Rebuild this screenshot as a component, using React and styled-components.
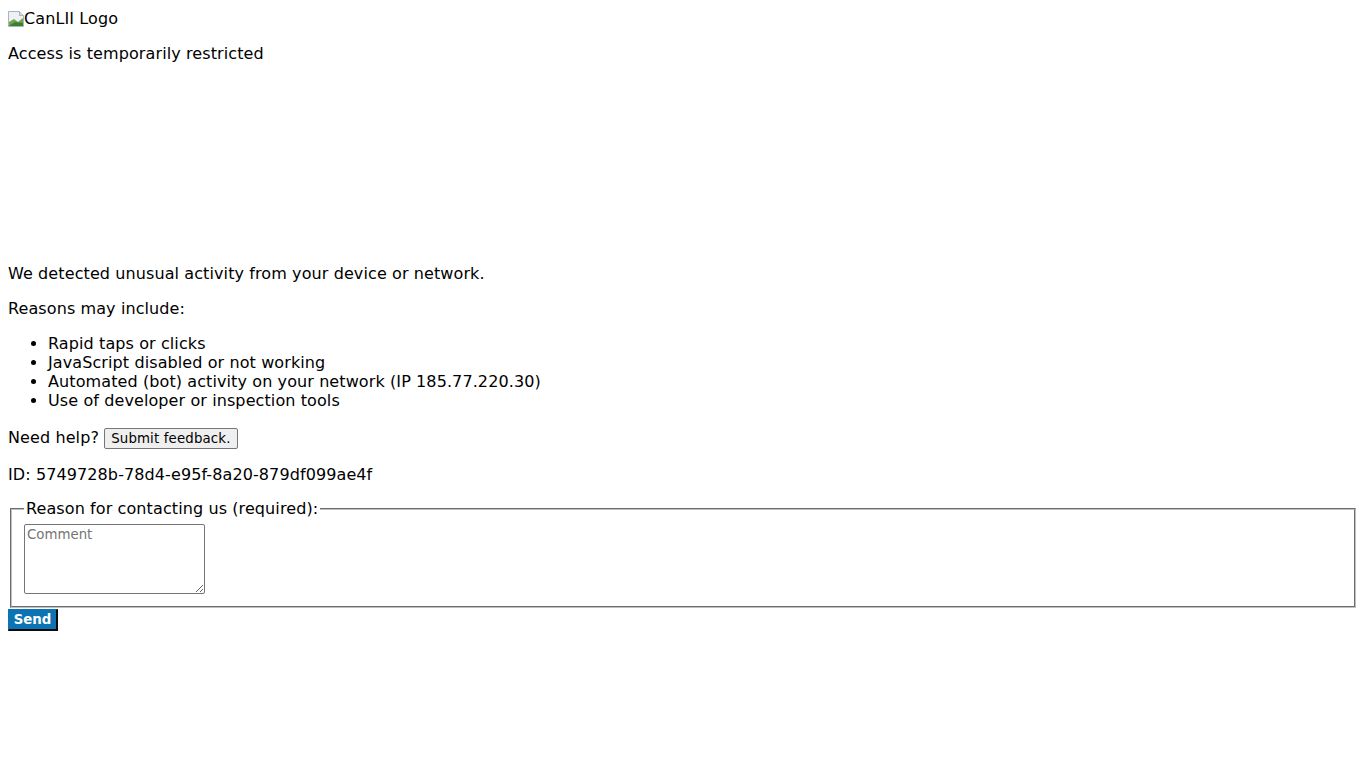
import styled, { createGlobalStyle } from "styled-components";

const GlobalStyle = createGlobalStyle`
  body {
    margin: 8px;
    font-family: "DejaVu Sans", Verdana, sans-serif;
    font-size: 16px;
    letter-spacing: 0.1px;
    color: #000;
    background: #fff;
  }
`;

const LogoRow = styled.div`
  margin-top: 1px;
  line-height: 19px;
  height: 19px;
  display: flex;
  align-items: center;
`;

const BrokenIcon = styled.svg`
  width: 16px;
  height: 16px;
  flex: none;
`;

const Text = styled.p`
  margin: 16px 0;
  line-height: 19px;
`;

const IdLine = styled(Text)`
  margin-bottom: 15px;
`;

const Spacer = styled.div`
  height: 169px;
`;

const List = styled.ul`
  margin: 16px 0;
  padding-left: 40px;
  line-height: 19px;
`;

const HelpLine = styled.p`
  margin: 16px 0;
  line-height: 23px;
`;

const FeedbackButton = styled.button`
  font-family: "DejaVu Sans", Verdana, sans-serif;
  font-size: 13.33px;
  letter-spacing: 0.15px;
  padding: 1px 6px;
  height: 21px;
  border: 1px solid #767676;
  border-radius: 2px;
  background: #efefef;
  color: #000;
  vertical-align: baseline;
`;

const Fieldset = styled.fieldset`
  margin: 0 2px;
  padding: 0 12px 12px;
  border: 2px groove #c0c0c0;
`;

const Legend = styled.legend`
  padding: 0 2px;
  line-height: 19px;
`;

const Comment = styled.textarea`
  display: block;
  box-sizing: border-box;
  width: 181px;
  height: 70px;
  margin: 6px 0 0;
  padding: 2px;
  font-family: "DejaVu Sans", Verdana, sans-serif;
  font-size: 13.33px;
  border: 1px solid #767676;
  border-radius: 2px;

  &::placeholder {
    color: #757575;
  }
`;

const SendButton = styled.button`
  display: block;
  margin-top: 1px;
  width: 50px;
  height: 22px;
  padding: 0;
  background: #0d74b3;
  color: #fff;
  font-family: "DejaVu Sans", Verdana, sans-serif;
  font-weight: bold;
  font-size: 13.33px;
  border-style: solid;
  border-color: #0d74b3 #0a0a0a #0a0a0a #0d74b3;
  border-width: 1px 2px 2px 1px;
`;

const reasons = [
  "Rapid taps or clicks",
  "JavaScript disabled or not working",
  "Automated (bot) activity on your network (IP 185.77.220.30)",
  "Use of developer or inspection tools",
];

export default function App() {
  return (
    <>
      <GlobalStyle />
      <LogoRow>
        <BrokenIcon viewBox="0 0 16 16">
          <path d="M0.5 0.5h11l4 4v11h-15z" fill="#eef1f4" stroke="#a9b3bd" />
          <path d="M11.5 0.5v4h4" fill="#d6dde4" stroke="#a9b3bd" />
          <path d="M1 15V11l5-3 4 3 5-4v8z" fill="#6aa84f" />
          <path d="M1 15l6-4 8 1v3z" fill="#3f7f2a" />
        </BrokenIcon>
        <span>CanLII Logo</span>
      </LogoRow>
      <Text>Access is temporarily restricted</Text>
      <Spacer />
      <Text>We detected unusual activity from your device or network.</Text>
      <Text>Reasons may include:</Text>
      <List>
        {reasons.map((r) => (
          <li key={r}>{r}</li>
        ))}
      </List>
      <HelpLine>
        Need help? <FeedbackButton>Submit feedback.</FeedbackButton>
      </HelpLine>
      <IdLine>ID: 5749728b-78d4-e95f-8a20-879df099ae4f</IdLine>
      <form>
        <Fieldset>
          <Legend>Reason for contacting us (required):</Legend>
          <Comment placeholder="Comment" />
        </Fieldset>
        <SendButton type="button">Send</SendButton>
      </form>
    </>
  );
}
